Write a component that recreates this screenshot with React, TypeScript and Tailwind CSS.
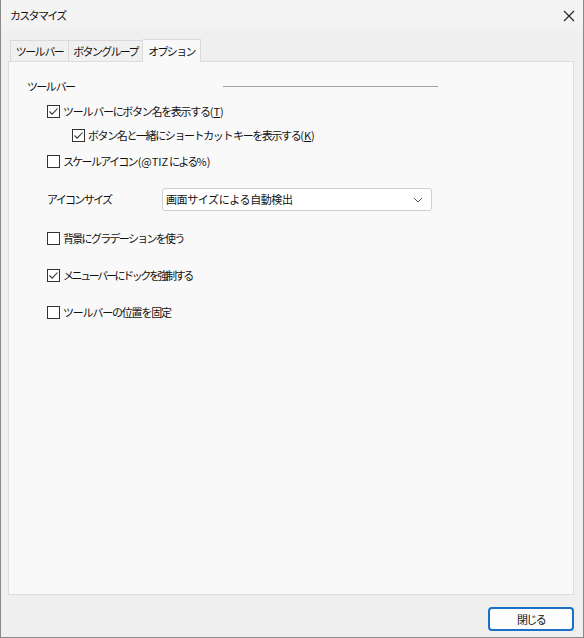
import type { ReactNode } from 'react';

function Check({ checked }: { checked?: boolean }) {
  return (
    <span className="w-[13px] h-[13px] border border-[#333333] bg-white flex items-center justify-center shrink-0">
      {checked ? (
        <svg width="11" height="11" viewBox="0 0 11 11" fill="none">
          <path d="M1.5 5.5 L4.2 8.2 L9.5 2.5" stroke="#333333" strokeWidth="1.1" />
        </svg>
      ) : null}
    </span>
  );
}

function Option({
  checked,
  children,
  indent,
  className,
}: {
  checked?: boolean;
  children: ReactNode;
  indent?: boolean;
  className?: string;
}) {
  return (
    <div className={`flex items-center gap-[3px] h-[16px] ${indent ? 'pl-[63px]' : 'pl-[38px]'} ${className ?? ''}`}>
      <Check checked={checked} />
      <span className="leading-none whitespace-nowrap">{children}</span>
    </div>
  );
}

const Shortcut = ({ k }: { k: string }) => (
  <span className="tracking-normal">
    (<span className="underline">{k}</span>)
  </span>
);

export default function App() {
  return (
    <div
      className="w-[584px] h-[638px] bg-[#efefef] border-x border-b border-[#8a8a8a] flex flex-col text-[11px] tracking-[-1.7px] text-[#111]"
      style={{ fontFamily: '"Noto Sans CJK JP", "Noto Sans", sans-serif' }}
    >
      <div className="h-[31px] bg-[#f3f3f3] flex items-center justify-between pl-[9px] pr-[6px]">
        <span>カスタマイズ</span>
        <svg width="14" height="14" viewBox="0 0 14 14" className="mr-[1px]">
          <path d="M2 2 L12 12 M12 2 L2 12" stroke="#222" strokeWidth="1.1" />
        </svg>
      </div>

      <div className="flex-1 flex flex-col px-[7px] pt-[8px]">
        <div className="flex items-end h-[22px] pl-[2px] whitespace-nowrap">
          <div className="w-[59px] h-[21px] flex items-center justify-center border border-[#d9d9d9] border-b-0 bg-[#f0f0f0]">
            ツール バー
          </div>
          <div className="w-[74px] h-[21px] flex items-center justify-center border border-l-0 border-[#d9d9d9] border-b-0 bg-[#f0f0f0]">
            ボタングループ
          </div>
          <div className="w-[58px] h-[23px] flex items-center justify-center border border-l-0 border-[#d9d9d9] border-b-0 bg-[#f9f9f9] relative top-[1px] z-10">
            オプション
          </div>
        </div>
        <div className="h-[534px] bg-[#f9f9f9] border border-[#dcdcdc] mr-[2px] flex flex-col pt-[16px]">
          <div className="flex items-center pl-[18px] h-[16px]">
            <span className="w-[196px]">ツール バー</span>
            <span className="w-[215px] h-px bg-[#a0a0a0]" />
          </div>
          <Option checked className="mt-[9px]">
            <span className="tracking-[-1.3px]">ツール バーにボタン名を表示する</span>
            <Shortcut k="T" />
          </Option>
          <Option checked indent className="mt-[8px]">
            <span className="tracking-[-1.4px]">ボタン名と一緒にショートカット キーを表示する</span>
            <Shortcut k="K" />
          </Option>
          <Option className="mt-[10px]">
            スケールアイコン <span className="tracking-normal">(@TIZ</span> による<span className="tracking-normal">%)</span>
          </Option>
          <div className="flex items-center pl-[38px] mt-[19px]">
            <span className="w-[115px]">アイコンサイズ</span>
            <div className="w-[270px] h-[23px] bg-white border border-[#cfcfcf] rounded-[3px] flex items-center justify-between pl-[3px] pr-[8px]">
              <span className="tracking-[-0.4px]">画面サイズによる自動検出</span>
              <svg width="10" height="6" viewBox="0 0 10 6" fill="none">
                <path d="M1 1 L5 5 L9 1" stroke="#555" strokeWidth="1" />
              </svg>
            </div>
          </div>
          <Option className="mt-[19px]">背景にグラデーションを使う</Option>
          <Option checked className="mt-[21px]">
            <span className="tracking-[-2.4px]">メニューバーにドックを強制する</span>
          </Option>
          <Option className="mt-[21px]">
            <span className="tracking-[-1.2px]">ツールバーの位置を固定</span>
          </Option>
        </div>
        <div className="flex justify-end pt-[12px] pr-[2px]">
          <button className="w-[86px] h-[24px] bg-[#fdfdfd] border-2 border-[#1a6fc9] rounded-[4px] flex items-center justify-center">
            閉じる
          </button>
        </div>
      </div>
    </div>
  );
}
